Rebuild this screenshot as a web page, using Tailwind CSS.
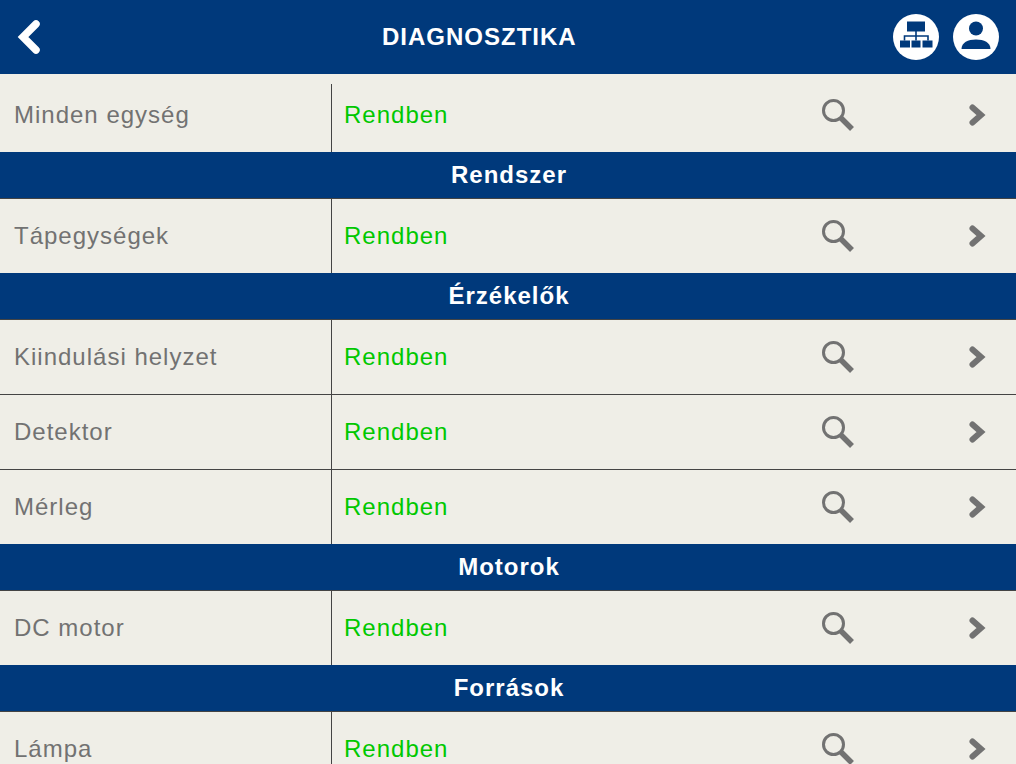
<!DOCTYPE html>
<html><head><meta charset="utf-8"><script src="https://cdn.jsdelivr.net/npm/@tailwindcss/browser@4"></script></head>
<body class="m-0 overflow-hidden">
<svg class="hidden"><defs>
<g id="mag"><circle cx="11.500" cy="12.500" r="10" fill="none" stroke="#727272" stroke-width="3"/><path d="M19 20 L30 31" fill="none" stroke="#727272" stroke-width="5.500" stroke-linecap="butt"/></g>
<path id="chev" d="M4.500 4.500 L13 12 L4.500 19.500" fill="none" stroke="#727272" stroke-width="6" stroke-linecap="round" stroke-linejoin="miter"/>
</defs></svg>
<div class="w-[1016px] h-[764px] overflow-hidden bg-[#efeee7] font-['Liberation_Sans',Arial,sans-serif]">
<header class="h-[74px] bg-[#00397b] flex items-center justify-between relative">
<svg class="ml-[16px]" width="26" height="36" viewBox="0 0 26 36"><path d="M20 5 L7 18 L20 31" fill="none" stroke="#fff" stroke-width="7.500" stroke-linecap="round" stroke-linejoin="miter"/></svg>
<h1 class="absolute left-[382px] text-[24px] font-bold text-white tracking-[1px]">DIAGNOSZTIKA</h1>
<div class="flex gap-[14px] mr-[17px]">
<div class="w-[46px] h-[46px] rounded-full bg-white">
<svg width="46" height="46" viewBox="0 0 46 46"><path fill="#00397b" d="M14 7.500h18v10H14z"/><path fill="#00397b" d="M7 26.500h10v7H7zM18.500 26.500h9v7h-9zM29.500 26.500h10v7h-10z"/><path fill="none" stroke="#00397b" stroke-width="1.600" d="M23 17v9.500M11.500 26.500v-4.500h23.500v4.500"/></svg>
</div>
<div class="w-[46px] h-[46px] rounded-full bg-white">
<svg width="46" height="46" viewBox="0 0 46 46" fill="#00397b"><circle cx="23" cy="14.500" r="7"/><path d="M8.500 35c0-6.500 6.500-9.500 14.500-9.500s14.500 3 14.500 9.500z"/></svg>
</div>
</div>
</header>
<main class="text-[24px] tracking-[1px] leading-[28px]">
<div class="h-[78px] pt-[10px] flex"><div class="w-[332px] border-r border-[#444] pl-[14px] text-[#727272] flex items-center pb-[6px] h-[68px]">Minden egység</div><div class="flex-1 pl-[12px] text-[#00c800] flex items-center pb-[6px]"><span class="w-[478px]">Rendben</span><svg width="34" height="34" viewBox="0 0 34 34"><use href="#mag"/></svg><svg class="ml-[112px]" width="20" height="24"><use href="#chev"/></svg></div></div>
<div class="h-[46px] pl-[2px] bg-[#00397b] text-white font-bold flex items-center justify-center">Rendszer</div>
<div class="h-[75px] border-t border-[#444] flex"><div class="w-[332px] border-r border-[#444] pl-[14px] text-[#727272] flex items-center">Tápegységek</div><div class="flex-1 pl-[12px] text-[#00c800] flex items-center"><span class="w-[478px]">Rendben</span><svg width="34" height="34" viewBox="0 0 34 34"><use href="#mag"/></svg><svg class="ml-[112px]" width="20" height="24"><use href="#chev"/></svg></div></div>
<div class="h-[46px] pl-[2px] bg-[#00397b] text-white font-bold flex items-center justify-center">Érzékelők</div>
<div class="h-[75px] border-t border-[#444] flex"><div class="w-[332px] border-r border-[#444] pl-[14px] text-[#727272] flex items-center">Kiindulási helyzet</div><div class="flex-1 pl-[12px] text-[#00c800] flex items-center"><span class="w-[478px]">Rendben</span><svg width="34" height="34" viewBox="0 0 34 34"><use href="#mag"/></svg><svg class="ml-[112px]" width="20" height="24"><use href="#chev"/></svg></div></div>
<div class="h-[75px] border-t border-[#444] flex"><div class="w-[332px] border-r border-[#444] pl-[14px] text-[#727272] flex items-center">Detektor</div><div class="flex-1 pl-[12px] text-[#00c800] flex items-center"><span class="w-[478px]">Rendben</span><svg width="34" height="34" viewBox="0 0 34 34"><use href="#mag"/></svg><svg class="ml-[112px]" width="20" height="24"><use href="#chev"/></svg></div></div>
<div class="h-[75px] border-t border-[#444] flex"><div class="w-[332px] border-r border-[#444] pl-[14px] text-[#727272] flex items-center">Mérleg</div><div class="flex-1 pl-[12px] text-[#00c800] flex items-center"><span class="w-[478px]">Rendben</span><svg width="34" height="34" viewBox="0 0 34 34"><use href="#mag"/></svg><svg class="ml-[112px]" width="20" height="24"><use href="#chev"/></svg></div></div>
<div class="h-[46px] pl-[2px] bg-[#00397b] text-white font-bold flex items-center justify-center">Motorok</div>
<div class="h-[75px] border-t border-[#444] flex"><div class="w-[332px] border-r border-[#444] pl-[14px] text-[#727272] flex items-center">DC motor</div><div class="flex-1 pl-[12px] text-[#00c800] flex items-center"><span class="w-[478px]">Rendben</span><svg width="34" height="34" viewBox="0 0 34 34"><use href="#mag"/></svg><svg class="ml-[112px]" width="20" height="24"><use href="#chev"/></svg></div></div>
<div class="h-[46px] pl-[2px] bg-[#00397b] text-white font-bold flex items-center justify-center">Források</div>
<div class="h-[75px] border-t border-[#444] flex"><div class="w-[332px] border-r border-[#444] pl-[14px] text-[#727272] flex items-center">Lámpa</div><div class="flex-1 pl-[12px] text-[#00c800] flex items-center"><span class="w-[478px]">Rendben</span><svg width="34" height="34" viewBox="0 0 34 34"><use href="#mag"/></svg><svg class="ml-[112px]" width="20" height="24"><use href="#chev"/></svg></div></div>
</main>
</div>
</body></html>
